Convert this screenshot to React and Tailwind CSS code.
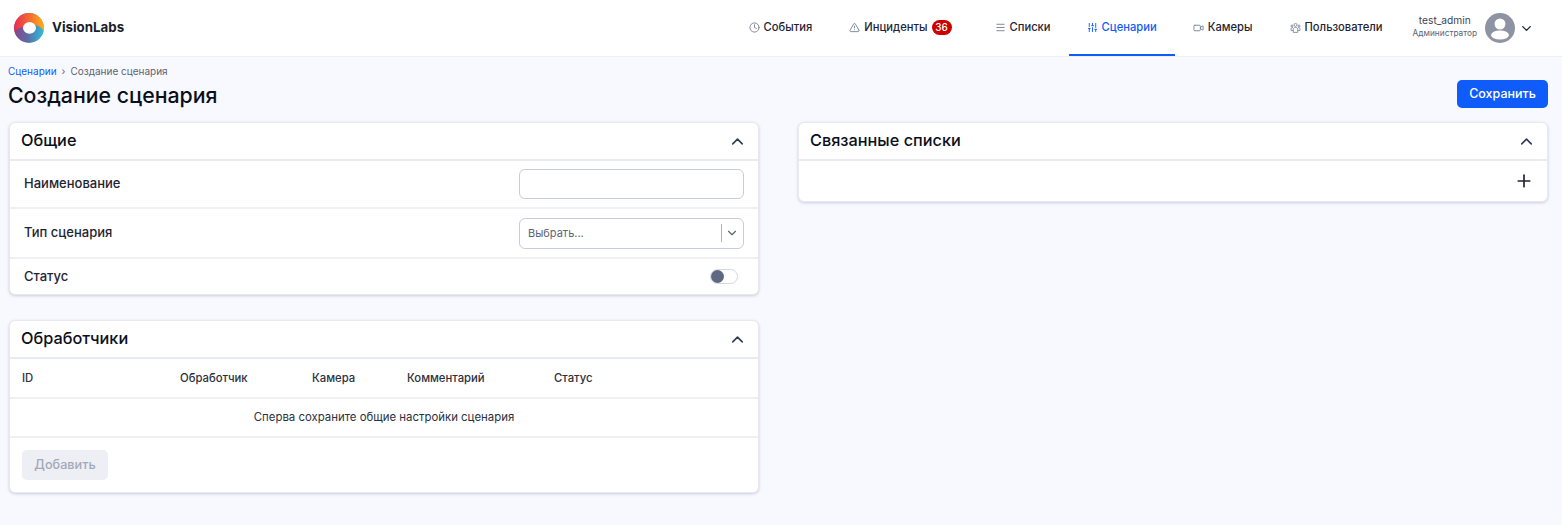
import { AlertTriangle, ChevronDown, ChevronUp, Clock, Menu, Plus, SlidersVertical, Video } from 'lucide-react'

function NavItem({ icon, label, active, badge, className = '' }) {
  return (
    <div className={`relative flex h-[56px] items-center px-[18px] pb-[1px] text-[11.2px] font-medium ${active ? 'text-[#0f5cfb]' : 'text-[#1f2433]'} ${className}`}>
      <span className={`mr-[4px] flex w-[11px] justify-center ${active ? 'text-[#0f5cfb]' : 'text-[#7a8090]'}`}>{icon}</span>
      {label}
      {badge && <span className="ml-[4px] flex h-[15px] w-[20px] items-center justify-center rounded-full bg-[#cc0000] text-[10px] text-white">{badge}</span>}
      {active && <span className="absolute bottom-0 left-0 right-0 h-[2px] bg-[#0f5cfb]"></span>}
    </div>
  )
}

function UsersIcon() {
  return (
    <svg width="12" height="12" viewBox="0 0 12 12" fill="none" stroke="currentColor" strokeWidth="0.9">
      <circle cx="6" cy="2.6" r="1.6" />
      <circle cx="2.2" cy="3.8" r="1.1" />
      <circle cx="9.8" cy="3.8" r="1.1" />
      <path d="M3.6 10.8V7.2c0-1 1-1.8 2.4-1.8s2.4.8 2.4 1.8v3.6z" />
      <path d="M3.4 8.8H1.2V6.6c0-.6.5-1 1.1-1h1M8.6 8.8h2.2V6.6c0-.6-.5-1-1.1-1h-1" />
    </svg>
  )
}

function Logo() {
  return (
    <svg width="30" height="30" viewBox="0 0 30 30">
      <defs>
        <linearGradient id="lg-top" x1="0" y1="0.4" x2="1" y2="0.4">
          <stop offset="0" stopColor="#ee2a4f" />
          <stop offset="0.55" stopColor="#f4702e" />
          <stop offset="1" stopColor="#fbb216" />
        </linearGradient>
        <linearGradient id="lg-bottom" x1="0" y1="0.5" x2="1" y2="0.6">
          <stop offset="0" stopColor="#8d3f86" />
          <stop offset="0.5" stopColor="#5a6fa8" />
          <stop offset="1" stopColor="#2cc0dc" />
        </linearGradient>
      </defs>
      <circle cx="15" cy="15" r="15" fill="url(#lg-bottom)" />
      <path d="M0.4 18C-1 8 6 0 15 0c8.300 0 15 6.700 15 15 0 1-.1 2-.3 3-3-5-8-7-14.700-6C9 13 5 15 .4 18z" fill="url(#lg-top)" />
      <ellipse cx="15.500" cy="14.800" rx="6.500" ry="5.900" fill="#ffffff" />
    </svg>
  )
}

function Card({ title, children, className = '' }) {
  return (
    <section className={`rounded-[6px] border border-[#e6e9f2] bg-white shadow-[0_1px_3px_rgba(120,130,160,0.35)] ${className}`}>
      <div className="flex h-[38px] items-center justify-between border-b-2 border-[#e8ebf3] pl-[11px] pr-[11px]">
        <h2 className="mb-[2px] text-[16.3px] font-[550] text-[#0b0f1a]">{title}</h2>
        <ChevronUp size={19} strokeWidth={2} className="text-[#2e3a55]" />
      </div>
      {children}
    </section>
  )
}

export default function App() {
  return (
    <div className="h-[525px] overflow-hidden bg-[#f8f9fe] font-['Inter',sans-serif]">
      <header className="flex h-[57px] items-center border-b border-[#eef0f6] bg-white pl-[14px] pr-[28px]">
        <Logo />
        <span className="ml-[8px] text-[13.300px] font-bold text-[#1a1d29]">VisionLabs</span>
        <nav className="ml-auto flex items-center">
          <NavItem icon={<Clock size={11} />} label="События" />
          <NavItem icon={<AlertTriangle size={11} />} label="Инциденты" badge="36" className="ml-[1px]" />
          <NavItem icon={<Menu size={11} />} label="Списки" className="ml-[7px]" />
          <NavItem icon={<SlidersVertical size={11} />} label="Сценарии" active />
          <NavItem icon={<Video size={12} />} label="Камеры" />
          <NavItem icon={<UsersIcon />} label="Пользователи" className="ml-[1px]" />
        </nav>
        <div className="ml-[12px] flex flex-col items-center pb-[3px]">
          <span className="text-[10.200px] leading-[13px] text-[#3b4254]">test_admin</span>
          <span className="text-[8.300px] leading-[12px] text-[#5c6475]">Администратор</span>
        </div>
        <svg className="ml-[8px]" width="30" height="30" viewBox="0 0 30 30">
          <circle cx="15" cy="15" r="15" fill="#8e93a3" />
          <circle cx="15" cy="11" r="5.500" fill="#ffffff" />
          <ellipse cx="15" cy="22" rx="9" ry="4.500" fill="#ffffff" />
        </svg>
        <ChevronDown size={15} strokeWidth={2.2} className="ml-[4px] text-[#1f2433]" />
      </header>

      <main className="pl-[8px] pr-[14px]">
        <div className="flex items-center pt-[8px] text-[10px] leading-[13px]">
          <span className="text-[#0f5cfb]">Сценарии</span>
          <span className="mx-[5px] text-[#5c6475]">›</span>
          <span className="text-[#5c6475]">Создание сценария</span>
        </div>
        <div className="flex h-[36px] items-start justify-between">
          <h1 className="pt-[3px] text-[21.300px] leading-[28px] font-[550] text-[#0b0f1a]">Создание сценария</h1>
          <button className="mt-[2px] h-[28px] w-[91px] rounded-[5px] bg-[#0f5cfb] text-[12.500px] font-medium text-white">Сохранить</button>
        </div>

        <div className="ml-[1px] mt-[8px] flex items-start gap-[39px]">
          <div className="flex w-[750px] flex-col gap-[25px]">
            <Card title="Общие">
              <div className="flex h-[48px] items-center justify-between border-b-2 border-[#eef0f6] pl-[14px] pr-[14px] text-[13px] font-[450] text-[#1f2433]">
                Наименование
                <input className="h-[30px] w-[225px] rounded-[6px] border border-[#c7ccdb] bg-white" />
              </div>
              <div className="flex h-[50px] items-center justify-between border-b-2 border-[#eef0f6] pl-[14px] pr-[14px] text-[13px] font-[450] text-[#1f2433]">
                Тип сценария
                <div className="flex h-[31px] w-[225px] items-center rounded-[6px] border border-[#c7ccdb] pl-[8px] pr-[4px] text-[11px] font-normal text-[#5c6475]">
                  Выбрать...
                  <span className="ml-auto h-[18px] w-px bg-[#aab0c0]"></span>
                  <ChevronDown size={14} strokeWidth={2} className="ml-[3px] text-[#5c6475]" />
                </div>
              </div>
              <div className="flex h-[35px] items-center justify-between pl-[14px] pr-[20px] text-[13px] font-[450] text-[#1f2433]">
                Статус
                <span className="flex h-[15px] w-[28px] items-center rounded-full border border-[#d3d7e3] bg-white">
                  <span className="h-[13px] w-[13px] rounded-full bg-[#5e6880]"></span>
                </span>
              </div>
            </Card>

            <Card title="Обработчики">
              <div className="grid h-[40px] grid-cols-[158px_132px_95px_147px_1fr] items-center border-b-2 border-[#eef0f6] pl-[12px] text-[11.300px] font-medium text-[#2b3140]">
                <span>ID</span>
                <span>Обработчик</span>
                <span>Камера</span>
                <span>Комментарий</span>
                <span>Статус</span>
              </div>
              <div className="flex h-[39px] items-center justify-center border-b-2 border-[#eef0f6] text-[11.400px] text-[#2b3140]">
                Сперва сохраните общие настройки сценария
              </div>
              <div className="flex h-[54px] items-center pl-[12px]">
                <button disabled className="h-[30px] w-[86px] rounded-[5px] bg-[#edeff4] text-[12.700px] font-medium text-[#a3a9b8]">Добавить</button>
              </div>
            </Card>
          </div>

          <Card title="Связанные списки" className="w-[750px]">
            <div className="flex h-[40px] items-center justify-end pr-[13px]">
              <Plus size={20} strokeWidth={2} className="text-[#1f2433]" />
            </div>
          </Card>
        </div>
      </main>
    </div>
  )
}
